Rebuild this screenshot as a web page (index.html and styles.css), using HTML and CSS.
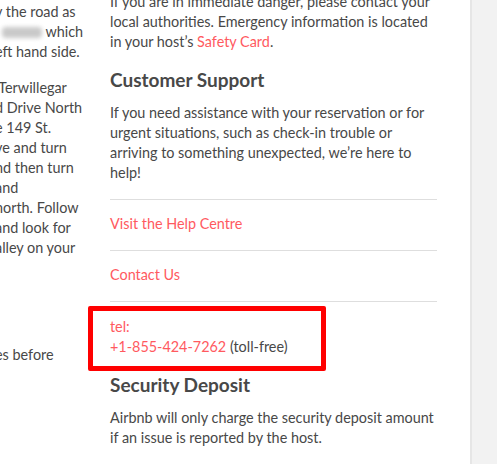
FILE: index.html
```html
<!DOCTYPE html>
<html>
<head>
<meta charset="utf-8">
<link rel="stylesheet" href="styles.css">
</head>
<body>
<div class="page">
  <div class="side">
    <p class="side-p">y the road as<br><span class="blur"></span> which<br>eft hand side.</p>
    <p class="side-p">&nbsp;Terwillegar<br>d Drive North<br>e 149 St.<br>ve and turn<br>nd then turn<br>and<br>north. Follow<br>and look for<br>alley on your</p>
    <p class="side-p side-last">es before</p>
  </div>
  <main class="main">
    <p class="text">If you are in immediate danger, please contact your local authorities. Emergency information is located in your host’s <a class="link" href="#">Safety Card</a>.</p>
    <h2 class="heading">Customer Support</h2>
    <p class="text">If you need assistance with your reservation or for urgent situations, such as check-in trouble or arriving to something unexpected, we’re here to help!</p>
    <ul class="links">
      <li class="links-item"><a class="link" href="#">Visit the Help Centre</a></li>
      <li class="links-item"><a class="link" href="#">Contact Us</a></li>
    </ul>
    <div class="tel">
      <a class="link" href="#">tel:</a><br>
      <a class="link" href="#">+1-855-424-7262</a> (toll-free)
      <div class="highlight"></div>
    </div>
    <h2 class="heading heading-sec">Security Deposit</h2>
    <p class="text">Airbnb will only charge the security deposit amount if an issue is reported by the host.</p>
  </main>
  <aside class="panel"></aside>
</div>
</body>
</html>
```
FILE: styles.css
```css
html, body {
  margin: 0;
  padding: 0;
  background: #fff;
  overflow: hidden;
}
body {
  font-family: "Lato", "Liberation Sans", sans-serif;
  font-size: 14.4px;
  line-height: 20px;
  color: #484848;
}
.page {
  display: flex;
  height: 464px;
}
.side {
  flex: none;
  width: 92px;
  margin-left: -5px;
  padding-top: 2px;
  white-space: nowrap;
  overflow: hidden;
}
.side-p {
  margin: 0 0 16px;
}
.side-last {
  margin-top: 87px;
}
.blur {
  display: inline-block;
  width: 40px;
  height: 11px;
  margin-left: 7px;
  vertical-align: -1px;
  background: #c9c9c9;
  border-radius: 4px;
  filter: blur(2px);
}
.main {
  flex: none;
  width: 327px;
  margin-left: 23px;
  margin-top: -8px;
}
.text {
  margin: 0 0 16px;
}
.link {
  color: #ff5a5f;
  text-decoration: none;
}
.heading {
  margin: 0 0 11px;
  font-size: 19px;
  line-height: 24px;
  font-weight: 700;
  color: #484848;
}
.heading-sec {
  margin-top: 16px;
}
.links {
  list-style: none;
  margin: 0;
  padding: 0;
}
.links-item {
  border-top: 1px solid #dedede;
  padding: 14px 0 16px;
}
.links-item:last-child {
  border-bottom: 1px solid #dedede;
}
.tel {
  position: relative;
  margin-top: 15px;
}
.highlight {
  position: absolute;
  left: -22px;
  top: -11px;
  width: 228px;
  height: 55px;
  border: 5px solid #ff0000;
  border-radius: 2px;
}
.panel {
  flex: 1;
  margin-left: 33px;
  background: #f2f2f2;
  border-left: 2px solid #e6e6e6;
}
```
